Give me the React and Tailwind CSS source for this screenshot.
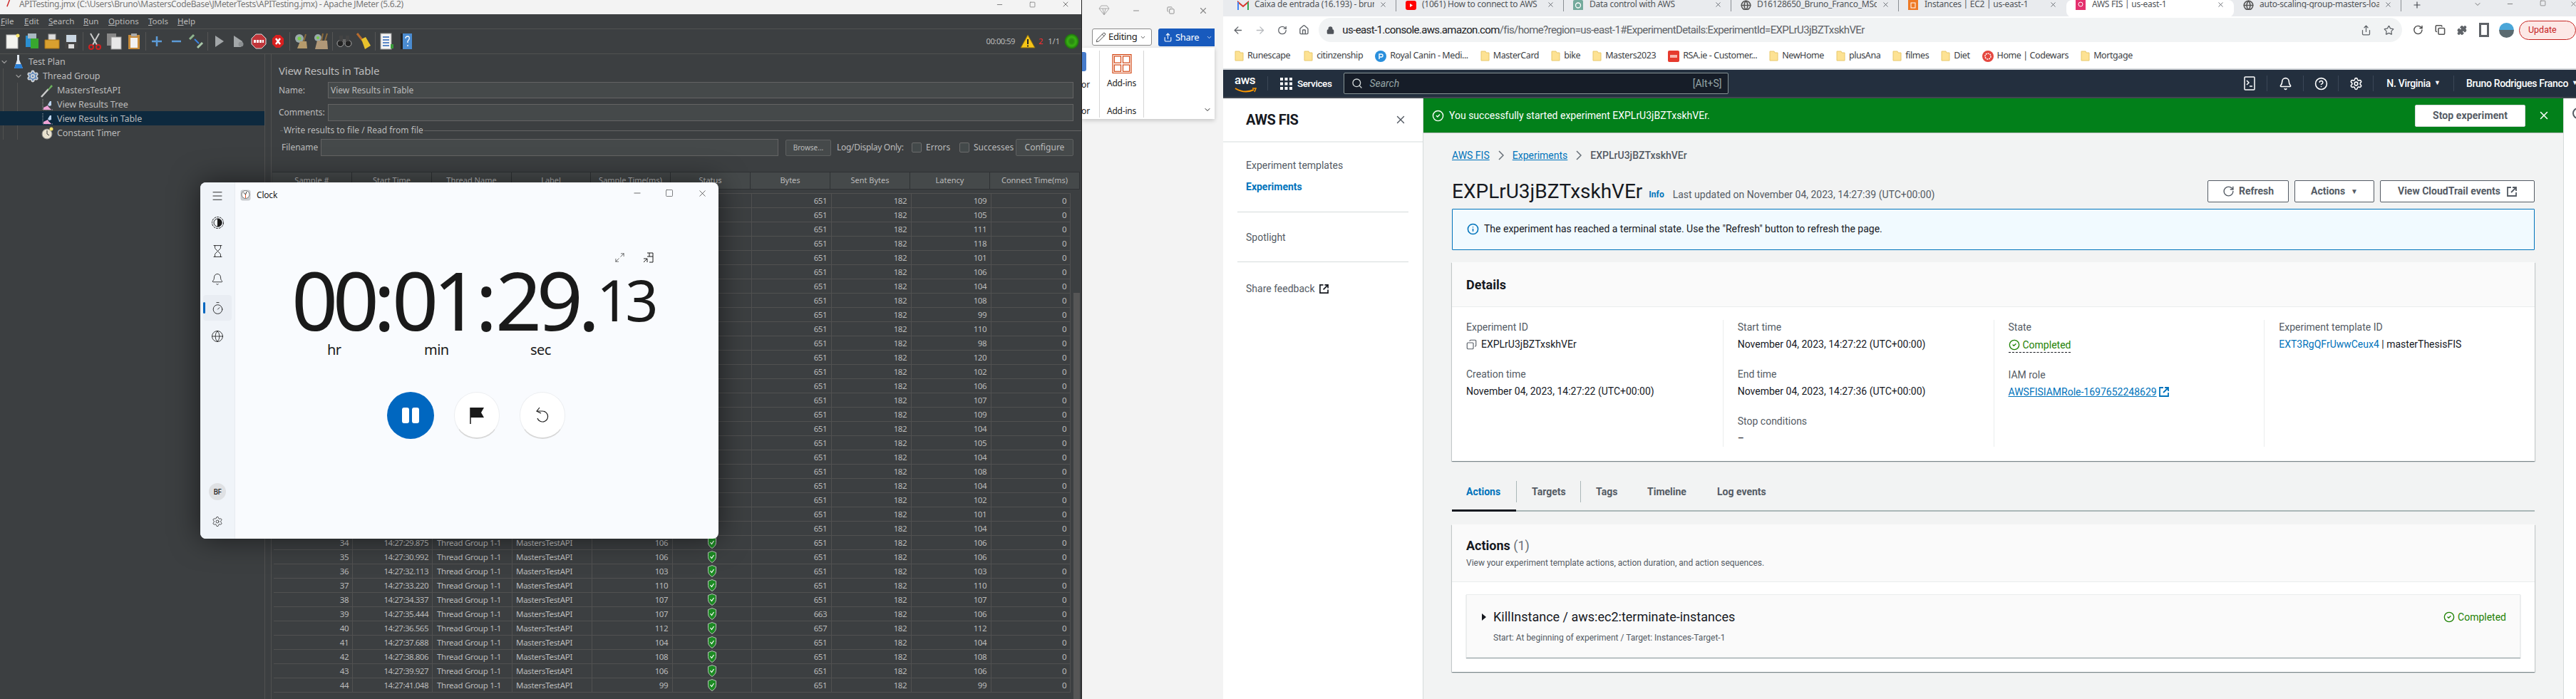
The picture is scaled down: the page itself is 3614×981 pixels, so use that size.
import {
  ArrowLeft, ArrowRight, RotateCw, Home, Lock, Share, Star, Puzzle, Search, Bell, Settings,
  X, Minus, Square, Copy, CircleCheck, Info, CircleHelp, Hourglass, Timer, Globe, Menu, Plus, ChevronDown,
  Pencil, Maximize2,
} from 'lucide-react'

const latency = [109, 105, 111, 118, 101, 106, 104, 108, 99, 110, 98, 120, 102, 106, 107, 109, 104, 105, 104, 108, 104, 102, 101, 104, 106, 106, 103, 110, 107, 106, 112, 104, 108, 106, 99]
const sampleTime = { 39: 107 }
const bytesOverride = { 39: 663, 40: 657 }
const times = { 34: '14:27:29.875', 35: '14:27:30.992', 36: '14:27:32.113', 37: '14:27:33.220', 38: '14:27:34.337', 39: '14:27:35.444', 40: '14:27:36.565', 41: '14:27:37.688', 42: '14:27:38.806', 43: '14:27:39.927', 44: '14:27:41.048' }

const headers = ['Sample #', 'Start Time', 'Thread Name', 'Label', 'Sample Time(ms)', 'Status', 'Bytes', 'Sent Bytes', 'Latency', 'Connect Time(ms)']
const rows = latency.map((l, i) => {
  const n = i + 10
  return { n, time: times[n], sample: sampleTime[n] || l, bytes: bytesOverride[n] || 651, latency: l, visible: n >= 34 }
})

function Folder() {
  return (
    <svg width="13" height="15" viewBox="0 0 13 15" className="shrink-0">
      <path d="M1 1h6l1 2h4v11H1z" fill="#fde293" stroke="#e8c86a" strokeWidth="1" />
    </svg>
  )
}

function TabX({ cls = '' }) {
  return <X size={11} strokeWidth={1.6} className={`text-[#45494f] shrink-0 ${cls}`} />
}

function Shield() {
  return (
    <svg width="12" height="17" viewBox="0 0 12 17">
      <path d="M6 .5l5.5 2v6c0 4-3 6.500-5.500 8C3.500 15 .5 12.500.5 8.500v-6z" fill="#1c8a23" stroke="#b8c0b8" />
      <path d="M3.500 8l2 2.500L8.500 6" fill="none" stroke="#fff" strokeWidth="1.200" />
    </svg>
  )
}

function ToolIcon({ name }) {
  switch (name) {
    case 'new':
      return <svg width="20" height="22" viewBox="0 0 20 22"><rect x="1" y="2" width="16" height="19" fill="#f4f4f0" stroke="#bbb" /><circle cx="17" cy="3" r="2.500" fill="#f5e26a" /></svg>
    case 'templates':
      return <svg width="20" height="24" viewBox="0 0 20 24"><rect x="1" y="4" width="7" height="16" fill="#2a8fd0" /><rect x="8" y="8" width="11" height="14" fill="#38a82e" /><rect x="4" y="1" width="12" height="7" fill="#a8b8c0" /></svg>
    case 'open':
      return <svg width="22" height="22" viewBox="0 0 22 22"><rect x="6" y="1" width="10" height="10" fill="#ddd" stroke="#999" /><path d="M1 9h20v12H1z" fill="#d9a02f" stroke="#a87518" /></svg>
    case 'save':
      return <svg width="20" height="22" viewBox="0 0 20 22"><rect x="1" y="1" width="18" height="20" fill="#444" /><rect x="3" y="2" width="14" height="10" fill="#c9d6e2" /><rect x="6" y="15" width="8" height="6" fill="#ddd" /></svg>
    case 'cut':
      return <svg width="18" height="24" viewBox="0 0 18 24" fill="none"><path d="M3 1l9 16M15 1L6 17" stroke="#ccc" strokeWidth="2" /><circle cx="4" cy="20" r="3" stroke="#d32020" strokeWidth="2" /><circle cx="14" cy="20" r="3" stroke="#d32020" strokeWidth="2" /></svg>
    case 'copy':
      return <svg width="22" height="24" viewBox="0 0 22 24"><rect x="1" y="1" width="13" height="17" fill="#888" /><rect x="7" y="6" width="14" height="17" fill="#e8e8e8" stroke="#999" /></svg>
    case 'paste':
      return <svg width="18" height="24" viewBox="0 0 18 24"><rect x="1" y="3" width="16" height="20" fill="#c78c3c" /><rect x="4" y="7" width="10" height="14" fill="#f2f2f2" /><rect x="5" y="1" width="8" height="4" fill="#aaa" /></svg>
    case 'plus':
      return <svg width="16" height="16" viewBox="0 0 16 16"><path d="M8 1v14M1 8h14" stroke="#5d9cd8" strokeWidth="2.500" /></svg>
    case 'minus':
      return <svg width="16" height="16" viewBox="0 0 16 16"><path d="M1 8h13" stroke="#5d9cd8" strokeWidth="2.500" /></svg>
    case 'toggle':
      return <svg width="22" height="22" viewBox="0 0 22 22"><path d="M2 8l6-6" stroke="#8fb58f" strokeWidth="3" /><path d="M9 8l6 6" stroke="#3b84e0" strokeWidth="2" /><path d="M13 20l7-7" stroke="#a9c7a9" strokeWidth="3" /></svg>
    case 'play':
      return <svg width="14" height="18" viewBox="0 0 14 18"><path d="M1 1l12 8-12 8z" fill="#a3a7a9" /></svg>
    case 'playn':
      return <svg width="16" height="18" viewBox="0 0 16 18"><path d="M1 1l12 8-2 8H1z" fill="#a3a7a9" /><circle cx="11" cy="13" r="3.500" fill="#8b8f91" /></svg>
    case 'stop':
      return <svg width="22" height="22" viewBox="0 0 22 22"><path d="M7 1h8l6 6v8l-6 6H7l-6-6V7z" fill="#c0353a" stroke="#ddd" /><path d="M4 11h14" stroke="#fff" strokeWidth="4" strokeDasharray="3 1" /></svg>
    case 'shut':
      return <svg width="18" height="20" viewBox="0 0 18 20"><path d="M6 1h6l5 5v8l-5 5H6l-5-5V6z" fill="#d81f1f" /><path d="M6 6l6 8M12 6l-6 8" stroke="#fff" strokeWidth="2.500" /></svg>
    case 'clear':
      return <svg width="20" height="24" viewBox="0 0 20 24"><circle cx="7" cy="8" r="6" fill="#9aa" /><circle cx="7" cy="8" r="2.500" fill="#7c4" /><path d="M16 2l-3 10" stroke="#8b6b3c" strokeWidth="2" /><path d="M4 22l4-10h9l1 10z" fill="#b59a6c" /></svg>
    case 'clearall':
      return <svg width="22" height="24" viewBox="0 0 22 24"><circle cx="7" cy="7" r="5" fill="#9aa" /><circle cx="7" cy="7" r="2" fill="#7c4" /><path d="M14 1l-2 10M20 1l-3 10" stroke="#8b6b3c" strokeWidth="2" /><path d="M3 23l3-12h14l1 12z" fill="#b09878" /></svg>
    case 'find':
      return <svg width="22" height="20" viewBox="0 0 22 20"><circle cx="5.500" cy="13" r="4.500" fill="#222" stroke="#aaa" /><circle cx="16.500" cy="13" r="4.500" fill="#222" stroke="#aaa" /><rect x="4" y="2" width="5" height="8" fill="#444" /><rect x="13" y="2" width="5" height="8" fill="#444" /><rect x="9" y="7" width="4" height="4" fill="#666" /></svg>
    case 'broom':
      return <svg width="22" height="24" viewBox="0 0 22 24"><path d="M2 1l8 10" stroke="#b76b2d" strokeWidth="3" /><path d="M8 9l6-3 7 12-8 5z" fill="#e8c22c" /></svg>
    case 'func':
      return <svg width="20" height="24" viewBox="0 0 20 24"><rect x="1" y="1" width="15" height="22" fill="#f4f4f4" stroke="#999" /><path d="M4 6h9M4 10h9M4 14h9M4 18h9" stroke="#2a64b8" strokeWidth="1.500" /><rect x="15" y="16" width="4" height="6" fill="#3a9a3a" /></svg>
    case 'help':
      return <svg width="18" height="24" viewBox="0 0 18 24"><rect x="1" y="1" width="16" height="22" fill="#4a8bd0" /><rect x="1" y="1" width="3" height="22" fill="#222" /><path d="M8 8q0-3 3-3t2 4l-2 3v2M11 17v2" stroke="#fff" fill="none" strokeWidth="1.300" /></svg>
    default:
      return null
  }
}

const tools = ['new', 'templates', 'open', 'save', '|', 'cut', 'copy', 'paste', '|', 'plus', 'minus', 'toggle', '|', 'play', 'playn', 'stop', 'shut', '|', 'clear', 'clearall', '|', 'find', 'broom', '|', 'func', 'help']

const menus = [['F', 'ile', 33], ['E', 'dit', 34], ['S', 'earch', 49], ['R', 'un', 35], ['O', 'ptions', 56], ['T', 'ools', 41], ['H', 'elp', 30]]

function TreeIcon({ kind }) {
  if (kind === 'flask') return <svg width="14" height="22" viewBox="0 0 14 22"><path d="M5 1h3v7l5 12H1L5 8z" fill="#dfe6ee" /><path d="M3 14h8l2 6H1z" fill="#2a7fd6" /></svg>
  if (kind === 'gear') return <Settings size={18} className="text-[#cfd3d6] fill-[#5b84b8]" strokeWidth={2.400} />
  if (kind === 'pipette') return <svg width="18" height="20" viewBox="0 0 18 20"><path d="M1 19l10-11" stroke="#ccc" strokeWidth="2.500" /><path d="M10 9l5-7 2 2-6 6z" fill="#6db35e" /></svg>
  if (kind === 'graph') return <svg width="15" height="16" viewBox="0 0 15 16"><path d="M1 0v15h14" stroke="#aaa" fill="none" strokeDasharray="1 1" /><path d="M2 15v-3l6-3 1 2 4 4z" fill="#f0a3d6" /><path d="M8 8l3-5 2 0v6l-3 1z" fill="#bcd4f0" /></svg>
  return <svg width="17" height="18" viewBox="0 0 17 18"><circle cx="8" cy="10" r="7" fill="#e8e2d0" stroke="#888" /><path d="M8 5v5l3 2" stroke="#333" fill="none" /><circle cx="14" cy="3" r="2.500" fill="#f5e26a" /></svg>
}

const treeRows = [
  { label: 'Test Plan', text: 'pl-[40px]', icon: 'flask', iconCls: 'left-[19px]', chev: 'left-[0px]' },
  { label: 'Thread Group', text: 'pl-[60px]', icon: 'gear', iconCls: 'left-[37px]', chev: 'left-[20px]' },
  { label: 'MastersTestAPI', text: 'pl-[80px]', icon: 'pipette', iconCls: 'left-[57px]' },
  { label: 'View Results Tree', text: 'pl-[80px]', icon: 'graph', iconCls: 'left-[59px]' },
  { label: 'View Results in Table', text: 'pl-[80px]', icon: 'graph', iconCls: 'left-[59px]', selected: true },
  { label: 'Constant Timer', text: 'pl-[80px]', icon: 'timer', iconCls: 'left-[58px]' },
]

function JMeter() {
  return (
    <div className="absolute left-0 top-0 w-[1518px] h-[981px] flex flex-col bg-[#3c3f41] border-r border-[#222] overflow-hidden text-[#bbbbbb] text-[11.500px] font-['Noto_Sans',sans-serif]">
      <div className="h-[20px] shrink-0 bg-[#f3f3f3] flex items-start text-[#777] text-[12px]">
        <svg width="8" height="10" viewBox="0 0 8 14" className="ml-[8px]"><path d="M6 0L1 13" stroke="#c22" strokeWidth="2" /></svg>
        <span className="ml-[11px] leading-[11px] tracking-[-0.35px]">APITesting.jmx (C:\Users\Bruno\MastersCodeBase\JMeterTests\APITesting.jmx) - Apache JMeter (5.6.2)</span>
        <div className="ml-auto flex items-center text-[#777]">
          <Minus size={11} className="mr-[36px]" />
          <Square size={9} className="mr-[36px]" />
          <X size={12} className="mr-[16px]" />
        </div>
      </div>
      <div className="h-[21px] shrink-0 flex items-center pl-[1px] border-b border-[#515151]">
        {menus.map(([u, rest, w]) => (
          <span key={u} style={{ width: w }}><span className="underline">{u}</span>{rest}</span>
        ))}
      </div>
      <div className="h-[35px] shrink-0 flex items-center border-b border-[#515151] relative">
        <div className="flex items-center pl-[4px]">
          {tools.map((t, i) => t === '|'
            ? <div key={i} className="w-px h-[26px] bg-[#555] mx-[2px]" />
            : <div key={i} className="w-[27.500px] flex justify-center"><ToolIcon name={t} /></div>)}
        </div>
        <div className="ml-auto flex items-center mr-[3px] text-[11px]">
          <span className="tracking-[-0.4px]">00:00:59</span>
          <svg width="22" height="20" viewBox="0 0 22 20" className="ml-[7px]"><path d="M11 1l10 18H1z" fill="#f5c518" stroke="#8a6d10" /><path d="M11 7v7M11 15.500v2" stroke="#222" strokeWidth="2" /></svg>
          <span className="text-[#ff2a2a] ml-[4px]">2</span>
          <span className="ml-[7px] mr-[6px]">1/1</span>
          <svg width="21" height="36" viewBox="0 0 21 36"><defs><radialGradient id="lamp"><stop offset="0.25" stopColor="#2b8a12" /><stop offset="0.6" stopColor="#38b012" /><stop offset="1" stopColor="#1d6f0d" /></radialGradient></defs><ellipse cx="10.500" cy="18" rx="10" ry="10.500" fill="url(#lamp)" /></svg>
        </div>
      </div>
      <div className="flex-1 flex min-h-0">
        <div className="w-[372px] shrink-0 relative border-r border-[#515151]">
          <div className="absolute left-[4px] top-[20px] h-[100px] w-px bg-[#515151]" />
          <div className="absolute left-[24px] top-[40px] h-[80px] w-px bg-[#515151]" />
          {treeRows.map(r => (
            <div key={r.label} className={`relative h-[20px] flex items-center pt-[2px] text-[12.500px] tracking-[-0.1px] ${r.text} ${r.selected ? 'bg-[#0d293e]' : ''}`}>
              {r.chev && <ChevronDown size={12} strokeWidth={2.400} className={`absolute ${r.chev} text-[#999]`} />}
              <span className={`absolute ${r.iconCls} flex items-center`}><TreeIcon kind={r.icon} /></span>
              {r.label}
            </div>
          ))}
        </div>
        <div className="w-[9px] shrink-0 border-r border-[#515151]" />
        <div className="flex-1 min-w-0 flex flex-col relative">
          <div className="h-[39px] shrink-0 pl-[10px] flex items-center pt-[8px] text-[15px] tracking-[-0.2px]">View Results in Table</div>
          <div className="h-[23px] shrink-0 flex items-center pl-[10px] text-[12px]">
            <span className="w-[69px]">Name:</span>
            <div className="w-[1046px] h-[23px] bg-[#45494a] border border-[#646464] flex items-center pl-[3px]">View Results in Table</div>
          </div>
          <div className="h-[24px] mt-[8px] shrink-0 flex items-center pl-[10px] text-[12px]">
            <span className="w-[69px]">Comments:</span>
            <div className="w-[1046px] h-[24px] bg-[#45494a] border border-[#646464]" />
          </div>
          <div className="h-[14px] mt-[6px] shrink-0 flex items-center pl-[12px] text-[12px]">
            <div className="w-[4px] h-px bg-[#646464]" />
            <span className="px-[1px]">Write results to file / Read from file</span>
            <div className="w-[922px] h-px bg-[#646464]" />
          </div>
          <div className="h-[24px] mt-[5px] shrink-0 flex items-center pl-[14px] text-[12px]">
            <span className="w-[55px]">Filename</span>
            <div className="w-[642px] h-[24px] bg-[#45494a] border border-[#646464]" />
            <div className="w-[64px] h-[23px] ml-[10px] bg-[#45494a] border border-[#5e6060] rounded-[2px] flex items-center justify-center text-[10px]">Browse...</div>
            <span className="ml-[8px] w-[105px] tracking-[-0.3px]">Log/Display Only:</span>
            <div className="w-[14px] h-[14px] bg-[#43494a] border border-[#6b6b6b] rounded-[2px]" />
            <span className="ml-[6px] w-[47px]">Errors</span>
            <div className="w-[14px] h-[14px] bg-[#43494a] border border-[#6b6b6b] rounded-[2px]" />
            <span className="ml-[6px] w-[59px]">Successes</span>
            <div className="w-[81px] h-[24px] bg-[#45494a] border border-[#5e6060] rounded-[2px] flex items-center justify-center">Configure</div>
          </div>
          <div className="h-[25px] mt-[22px] mx-[1px] shrink-0 flex bg-[#45494a] border-y border-[#2f3234] w-[1133px] text-[11px]">
            {headers.map((h, i) => (
              <div key={h} className={`h-full flex items-center justify-center border-r border-[#2f3234] ${i === 9 ? 'w-[126px]' : i === 3 ? 'w-[111px]' : 'w-[112px]'}`}>{h}</div>
            ))}
          </div>
          <div className="pl-[3px] pt-[5px] flex-1 min-h-0 text-[11.500px] tracking-[-0.5px] relative">
            {rows.map(r => (
              <div key={r.n} className="h-[20px] w-[1118px] flex border-t border-[#515151] items-center">
                <div className="w-[111px] h-full border-r border-[#515151] flex items-center justify-end pr-[5px]">{r.visible && r.n}</div>
                <div className="w-[112px] h-full border-r border-[#515151] flex items-center justify-end pr-[5px]">{r.visible && r.time}</div>
                <div className="w-[112px] h-full border-r border-[#515151] flex items-center pl-[6px] tracking-[-0.3px]">{r.visible && 'Thread Group 1-1'}</div>
                <div className="w-[112px] h-full border-r border-[#515151] flex items-center pl-[5px] tracking-[-0.3px]">{r.visible && 'MastersTestAPI'}</div>
                <div className="w-[113px] h-full border-r border-[#515151] flex items-center justify-end pr-[6px]">{r.visible && r.sample}</div>
                <div className="w-[111px] h-full border-r border-[#515151] flex items-center justify-center">{r.visible && <Shield />}</div>
                <div className="w-[112px] h-full border-r border-[#515151] flex items-center justify-end pr-[6px]">{r.bytes}</div>
                <div className="w-[112px] h-full border-r border-[#515151] flex items-center justify-end pr-[6px]">182</div>
                <div className="w-[112px] h-full border-r border-[#515151] flex items-center justify-end pr-[6px]">{r.latency}</div>
                <div className="w-[111px] h-full border-r border-[#515151] flex items-center justify-end pr-[5px]">0</div>
              </div>
            ))}
            <div className="w-[1118px] border-t border-[#515151]" />
            <div className="absolute left-[1125px] top-[145px] w-[9px] h-[600px] bg-[#565656]" />
          </div>
        </div>
      </div>
    </div>
  )
}

function Word() {
  return (
    <div className="absolute left-[1518px] top-0 w-[198px] h-[981px] bg-[#f3f3f3] text-[#222] text-[12px] font-['Noto_Sans',sans-serif] overflow-hidden">
      <div className="h-[40px] flex items-start pt-[7px] text-[#888]">
        <svg width="16" height="15" viewBox="0 0 16 15" fill="none" stroke="#aaa" className="ml-[23px]"><path d="M4 1h8l3 4-7 9-7-9zM1 5h14M6 5l2 9 2-9" /></svg>
        <Minus size={12} className="ml-[31px] mt-[2px]" />
        <Copy size={11} className="ml-[37px] mt-[2px]" />
        <X size={14} className="ml-[33px] mt-[1px]" />
      </div>
      <div className="h-[27px] flex items-start pl-[14px]">
        <div className="w-[84px] h-[24px] bg-white border border-[#8a8a8a] rounded-[3px] flex items-center pl-[4px] gap-[3px] text-[13px] tracking-[-0.3px]">
          <Pencil size={15} strokeWidth={1.300} />Editing<ChevronDown size={9} />
        </div>
        <div className="w-[79px] h-[25px] ml-[9px] bg-[#185abd] rounded-l-[3px] text-white flex items-center pl-[7px] gap-[4px] text-[13px] tracking-[-0.3px]">
          <Share size={13} />Share<ChevronDown size={9} className="ml-[6px]" />
        </div>
      </div>
      <div className="w-[186px] h-[100px] bg-white shadow-[0_2px_6px_rgba(0,0,0,0.2)] relative flex">
        <div className="w-[25px] h-[94px] border-r border-[#d6d6d6] mt-[4px] flex flex-col items-start text-[12px]">
          <div className="h-[30px] mt-[2px] w-[6px] bg-[#185abd] rounded-r-[3px] opacity-80" />
          <span className="mt-[10px] -ml-[1px] h-[40px]">or</span>
          <span className="-ml-[1px]">or</span>
        </div>
        <div className="w-[62px] h-[94px] mt-[4px] border-r border-[#d6d6d6] flex flex-col items-center text-[12px] tracking-[-0.2px]">
          <svg width="28" height="28" viewBox="0 0 28 28" fill="none" stroke="#d1410c" strokeWidth="1.200" className="mt-[5px]"><rect x=".6" y=".6" width="26.800" height="26.800" /><rect x="3" y="3" width="9.500" height="9.500" /><rect x="15.500" y="3" width="9.500" height="9.500" /><rect x="3" y="15.500" width="9.500" height="9.500" /><rect x="15.500" y="15.500" width="9.500" height="9.500" /></svg>
          <span className="mt-[5px] h-[40px]">Add-ins</span>
          <span>Add-ins</span>
        </div>
        <ChevronDown size={12} className="absolute left-[170px] top-[81px]" />
      </div>
    </div>
  )
}

function NavSep() {
  return <div className="w-px h-[22px] bg-[#3b4757]" />
}

function Tab({ w = 'w-[235px]', icon, title, active, sep = true }) {
  return (
    <div className={`${w} h-[23px] shrink-0 relative flex items-start ${active ? 'bg-white rounded-t-[8px] rounded-b-[8px] h-[24px]' : ''}`}>
      <span className="ml-[12px] w-[16px] h-[14px] flex items-center justify-center overflow-hidden">{icon}</span>
      <span className="ml-[8px] w-[168px] whitespace-nowrap overflow-hidden leading-[12px] text-[12px] tracking-[-0.25px] text-[#505458]">{title}</span>
      <TabX cls="ml-[7px] mt-[1px]" />
      {sep && <div className="absolute right-0 top-0 h-[16px] w-px bg-[#8a8e93]" />}
    </div>
  )
}

const bookmarks = [
  [null, 'Runescape', 'ml-[16px]'],
  [null, 'citinzenship', 'ml-[19px]'],
  ['royal', 'Royal Canin - Medi...', 'ml-[17px]'],
  [null, 'MasterCard', 'ml-[17px]'],
  [null, 'bike', 'ml-[17px]'],
  [null, 'Masters2023', 'ml-[17px]'],
  ['rsa', 'RSA.ie - Customer...', 'ml-[17px]'],
  [null, 'NewHome', 'ml-[17px]'],
  [null, 'plusAna', 'ml-[17px]'],
  [null, 'filmes', 'ml-[17px]'],
  [null, 'Diet', 'ml-[17px]'],
  ['gpt', 'Home | Codewars', 'ml-[17px]'],
  [null, 'Mortgage', 'ml-[17px]'],
]

function BookmarkIcon({ kind }) {
  if (kind === 'royal') return <svg width="16" height="16" viewBox="0 0 16 16" className="shrink-0"><circle cx="8" cy="8" r="8" fill="#2a8fdc" /><path d="M6 12V5h3q2 0 2 2t-2 2H6" stroke="#fff" fill="none" strokeWidth="1.400" /></svg>
  if (kind === 'rsa') return <svg width="16" height="16" viewBox="0 0 16 16" className="shrink-0"><rect width="16" height="16" rx="2" fill="#e63a2e" /><rect x="3" y="6" width="10" height="4" fill="#f7b6ae" /></svg>
  if (kind === 'gpt') return <svg width="16" height="16" viewBox="0 0 16 16" className="shrink-0"><circle cx="8" cy="8" r="8" fill="#e5473f" /><circle cx="8" cy="8" r="4" fill="none" stroke="#fff" strokeWidth="1.500" strokeDasharray="2 1" /></svg>
  return <Folder />
}

function Label({ children, cls = '' }) {
  return <div className={`text-[#545b64] text-[14px] leading-[20px] ${cls}`}>{children}</div>
}

function Value({ children, cls = '' }) {
  return <div className={`text-[#16191f] text-[14px] leading-[20px] mt-[4px] ${cls}`}>{children}</div>
}

function ExtIcon({ size = 13 }) {
  return (
    <svg width={size} height={size} viewBox="0 0 14 14" fill="none" stroke="currentColor" strokeWidth="1.800" className="inline-block align-[-2px]">
      <path d="M6 1H1v12h12V8M8 1h5v5M13 1L6 8" />
    </svg>
  )
}

function Browser() {
  return (
    <div className="absolute left-[1716px] top-0 w-[1898px] h-[981px] flex flex-col bg-white overflow-hidden font-['Roboto',sans-serif]">
      <div className="h-[23px] shrink-0 bg-[#e9ebee] flex pl-[8px] font-['Noto_Sans',sans-serif]">
        <Tab title="Caixa de entrada (16.193) - bruno" icon={<svg width="16" height="13" viewBox="0 0 16 13"><path d="M1 13V2l7 6 7-6v11" fill="none" stroke="#d9352a" strokeWidth="2" /><path d="M1 2v11" stroke="#4285f4" strokeWidth="2" /><path d="M15 2v11" stroke="#34a853" strokeWidth="2" /></svg>} />
        <Tab title="(1061) How to connect to AWS" icon={<svg width="15" height="13" viewBox="0 0 15 13"><rect width="15" height="13" rx="3" fill="#f00" /><path d="M6 4l4 2.500L6 9z" fill="#fff" /></svg>} />
        <Tab title="Data control with AWS" icon={<svg width="14" height="15" viewBox="0 0 14 15"><rect width="14" height="15" rx="2" fill="#74aa9c" /><circle cx="7" cy="7.500" r="3.500" fill="none" stroke="#fff" strokeWidth="1.300" /></svg>} />
        <Tab title="D16128650_Bruno_Franco_MSc" icon={<Globe size={15} className="text-[#555]" strokeWidth={2.500} />} />
        <Tab sep={false} title="Instances | EC2 | us-east-1" icon={<svg width="14" height="15" viewBox="0 0 14 15"><rect width="14" height="15" fill="#ee7a26" /><rect x="4" y="4" width="6" height="7" fill="none" stroke="#fff" /></svg>} />
        <Tab active sep={false} title="AWS FIS | us-east-1" icon={<svg width="14" height="15" viewBox="0 0 14 15"><rect width="14" height="15" fill="#e4306e" /><circle cx="7" cy="6" r="3" fill="none" stroke="#fff" /></svg>} />
        <Tab title="auto-scaling-group-masters-load" icon={<Globe size={15} className="text-[#555]" strokeWidth={2.500} />} />
        <Plus size={14} strokeWidth={2} className="ml-[15px] mt-[0px] text-[#45494f] shrink-0" />
        <ChevronDown size={12} className="ml-[72px] text-[#777] shrink-0" />
        <Minus size={11} className="ml-[34px] text-[#777] shrink-0" />
        <Square size={9} className="ml-[36px] text-[#777] shrink-0" />
        <X size={11} className="ml-[33px] text-[#777] shrink-0" />
      </div>

      <div className="h-[38px] shrink-0 flex items-center pl-[13px] text-[#5f6368]">
        <ArrowLeft size={17} strokeWidth={2} />
        <ArrowRight size={17} strokeWidth={2} className="ml-[15px] text-[#b6b9bd]" />
        <RotateCw size={15} strokeWidth={2.200} className="ml-[16px]" />
        <Home size={16} strokeWidth={2.200} className="ml-[17px]" />
        <div className="ml-[13px] w-[1520px] h-[34px] rounded-full bg-[#f1f3f4] flex items-center pl-[11px] pr-[10px] shrink-0">
          <Lock size={11} strokeWidth={3} className="text-[#50545a] fill-[#50545a]" />
          <span className="ml-[11px] text-[15px] text-[#202124] tracking-[-0.62px] whitespace-nowrap"><span>us-east-1.console.aws.amazon.com</span><span className="text-[#5f6368]">/fis/home?region=us-east-1#ExperimentDetails:ExperimentId=EXPLrU3jBZTxskhVEr</span></span>
          <Share size={15} className="ml-auto" />
          <Star size={15} strokeWidth={2} className="ml-[17px] mr-[1px]" />
        </div>
        <RotateCw size={16} strokeWidth={2.200} className="ml-[15px] text-[#444]" />
        <Copy size={16} strokeWidth={2.500} className="ml-[16px] text-[#555]" />
        <Puzzle size={15} strokeWidth={2} className="ml-[16px] text-[#5f6368] fill-[#5f6368]" />
        <div className="ml-[17px] w-[14px] h-[20px] border-[3px] border-[#5f6368] shrink-0" />
        <div className="ml-[14px] w-[21px] h-[21px] rounded-full bg-[linear-gradient(180deg,#4aa6d8_50%,#5a6a70_50%)] shrink-0" />
        <div className="ml-[7px] w-[80px] h-[27px] rounded-full border border-[#c5221f] bg-[#fce8e6] text-[#c5221f] text-[12.500px] flex items-center pl-[12px] shrink-0">Update</div>
      </div>

      <div className="h-[37px] shrink-0 flex items-center pl-[16px] border-b-2 border-[#d3d6da] text-[12.500px] tracking-[-0.42px] text-[#3c4043] font-['Noto_Sans',sans-serif]">
        {bookmarks.map(([kind, label, ml], i) => (
          <div key={label} className={`flex items-center gap-[5px] whitespace-nowrap ${i === 0 ? '' : ml}`}>
            <BookmarkIcon kind={kind} />
            <span>{label}</span>
          </div>
        ))}
      </div>

      <div className="h-[40px] shrink-0 bg-[#232f3e] flex items-center text-white border-b-2 border-[#414750]">
        <div className="w-[46px] ml-[16px] relative h-full shrink-0">
          <span className="absolute left-0 top-[4px] text-[17px] font-medium tracking-[-0.5px] leading-[20px]">aws</span>
          <svg width="32" height="9" viewBox="0 0 32 9" fill="none" className="absolute left-0 top-[25px]"><path d="M1 1q13 8 26 2" stroke="#ff9900" strokeWidth="2" /><path d="M25 1l5 0-2 5" stroke="#ff9900" strokeWidth="1.500" /></svg>
        </div>
        <div className="w-px h-[20px] bg-[#3b4757]" />
        <svg width="17" height="17" viewBox="0 0 17 17" fill="#fff" className="ml-[17px]"><rect width="4" height="4" /><rect x="6.500" width="4" height="4" /><rect x="13" width="4" height="4" /><rect y="6.500" width="4" height="4" /><rect x="6.500" y="6.500" width="4" height="4" /><rect x="13" y="6.500" width="4" height="4" /><rect y="13" width="4" height="4" /><rect x="6.500" y="13" width="4" height="4" /><rect x="13" y="13" width="4" height="4" /></svg>
        <span className="ml-[7px] text-[13.500px] font-medium tracking-[-0.4px]">Services</span>
        <div className="ml-[17px] w-[540px] h-[30px] bg-[#161d28] border border-[#879596] rounded-[2px] flex items-center pl-[10px] pr-[9px] text-[#95a5a6] text-[14px] shrink-0">
          <Search size={16} className="text-[#d5dbdb]" />
          <span className="ml-[9px] italic">Search</span>
          <span className="ml-auto">[Alt+S]</span>
        </div>
        <div className="ml-auto flex items-center">
          <svg width="16" height="20" viewBox="0 0 16 20" fill="none" stroke="#fff" strokeWidth="1.500"><rect x="1" y="1" width="14" height="18" rx="1" /><path d="M4 6l3 3-3 3M8 14h4" /></svg>
          <div className="ml-[16px]"><NavSep /></div>
          <Bell size={19} className="ml-[16px] mr-[15px] fill-transparent" />
          <NavSep />
          <CircleHelp size={19} className="ml-[15px] mr-[14px]" />
          <NavSep />
          <Settings size={19} className="ml-[15px] mr-[14px]" />
          <NavSep />
          <span className="ml-[18px] text-[14px] font-medium tracking-[-0.3px]">N. Virginia</span>
          <span className="ml-[5px] text-[9px]">▼</span>
          <div className="ml-[18px]"><NavSep /></div>
          <span className="ml-[17px] text-[14px] font-medium tracking-[-0.35px] whitespace-nowrap">Bruno Rodrigues Franco</span>
          <span className="ml-[5px] text-[9px] w-[6px] overflow-hidden">▼</span>
        </div>
      </div>

      <div className="flex-1 flex min-h-0">
        <div className="w-[281px] shrink-0 border-r border-[#d5dbdb] bg-white text-[#545b64] text-[14px]">
          <div className="h-[62px] border-b-2 border-[#eaeded] flex items-center justify-between pl-[32px] pr-[22px]">
            <span className="text-[20px] font-bold text-[#16191f] tracking-[-0.5px]">AWS FIS</span>
            <X size={18} strokeWidth={1.800} className="text-[#545b64]" />
          </div>
          <div className="pl-[32px] pt-[22px] h-[97px] leading-[20px] mx-0">
            <div>Experiment templates</div>
            <div className="mt-[10px] text-[#0073bb] font-bold">Experiments</div>
          </div>
          <div className="mx-[20px] h-px bg-[#d5dbdb]" />
          <div className="pl-[32px] pt-[25px] h-[69px] leading-[20px]">Spotlight</div>
          <div className="mx-[20px] h-px bg-[#d5dbdb]" />
          <div className="pl-[32px] pt-[27px] leading-[20px] flex items-center gap-[6px]">Share feedback <span className="text-[#16191f]"><ExtIcon /></span></div>
        </div>

        <div className="flex-1 min-w-0 bg-[#f2f3f3] flex flex-col">
          <div className="h-[49px] shrink-0 bg-[#02801a] border-b border-[#bbb] flex items-center pl-[12px] pr-[18px] text-white text-[14px]">
            <CircleCheck size={17} strokeWidth={2} />
            <span className="ml-[7px]">You successfully started experiment EXPLrU3jBZTxskhVEr.</span>
            <div className="ml-auto w-[155px] h-[31px] bg-white border border-[#d5dbdb] rounded-[2px] flex items-center justify-center text-[#545b64] font-bold tracking-[0.1px]">Stop experiment</div>
            <X size={18} strokeWidth={2} className="ml-[17px]" />
          </div>
          <div className="pl-[40px] pr-[40px] flex flex-col flex-1">
            <div className="h-[20px] mt-[21px] flex items-center text-[14px] text-[#0073bb]">
              <span className="underline">AWS FIS</span>
              <svg width="8" height="14" viewBox="0 0 8 14" fill="none" stroke="#687078" strokeWidth="1.500" className="mx-[12px]"><path d="M1 1l6 6-6 6" /></svg>
              <span className="underline">Experiments</span>
              <svg width="8" height="14" viewBox="0 0 8 14" fill="none" stroke="#687078" strokeWidth="1.500" className="mx-[12px]"><path d="M1 1l6 6-6 6" /></svg>
              <span className="text-[#545b64] font-medium">EXPLrU3jBZTxskhVEr</span>
            </div>
            <div className="h-[31px] mt-[25px] flex items-center">
              <span className="text-[28px] text-[#16191f] leading-[31px]">EXPLrU3jBZTxskhVEr</span>
              <span className="ml-[9px] mt-[8px] text-[12px] font-bold text-[#0073bb]">Info</span>
              <span className="ml-[12px] mt-[9px] text-[14px] text-[#545b64]">Last updated on November 04, 2023, 14:27:39 (UTC+00:00)</span>
              <div className="ml-auto flex gap-[8px] text-[14px] font-bold text-[#545b64]">
                <div className="w-[114px] h-[31px] bg-white border border-[#545b64] rounded-[2px] flex items-center justify-center gap-[6px]"><RotateCw size={17} strokeWidth={2} />Refresh</div>
                <div className="w-[112px] h-[31px] bg-white border border-[#545b64] rounded-[2px] flex items-center justify-center gap-[8px]">Actions<span className="text-[10px]">▼</span></div>
                <div className="w-[217px] h-[31px] bg-white border border-[#545b64] rounded-[2px] flex items-center justify-center gap-[9px]">View CloudTrail events<ExtIcon size={14} /></div>
              </div>
            </div>
            <div className="h-[58px] mt-[9px] bg-[#f1faff] border border-[#0073bb] rounded-[1px] flex items-center pl-[20px] text-[14px] text-[#16191f] pb-[2px]">
              <Info size={17} strokeWidth={2.200} className="text-[#0073bb]" />
              <span className="ml-[7px]">The experiment has reached a terminal state. Use the "Refresh" button to refresh the page.</span>
            </div>
            <div className="h-[279px] mt-[17px] bg-white shadow-[0_1px_1px_rgba(0,28,36,0.3),1px_1px_1px_rgba(0,28,36,0.15),-1px_1px_1px_rgba(0,28,36,0.15)]">
              <div className="h-[63px] bg-[#fafafa] border-b border-[#eaeded] flex items-center pl-[20px] text-[18px] font-bold text-[#16191f]">Details</div>
              <div className="grid grid-cols-4 pt-[18px]">
                <div className="h-[178px] pl-[20px]">
                  <Label>Experiment ID</Label>
                  <Value cls="flex items-center gap-[6px]"><Copy size={15} strokeWidth={1.800} className="text-[#545b64] -scale-x-100" /><span>EXPLrU3jBZTxskhVEr</span></Value>
                  <Label cls="mt-[22px]">Creation time</Label>
                  <Value>November 04, 2023, 14:27:22 (UTC+00:00)</Value>
                </div>
                <div className="h-[178px] pl-[20px] border-l border-[#eaeded]">
                  <Label>Start time</Label>
                  <Value>November 04, 2023, 14:27:22 (UTC+00:00)</Value>
                  <Label cls="mt-[22px]">End time</Label>
                  <Value>November 04, 2023, 14:27:36 (UTC+00:00)</Value>
                  <Label cls="mt-[22px]">Stop conditions</Label>
                  <Value>–</Value>
                </div>
                <div className="h-[178px] pl-[20px] border-l border-[#eaeded]">
                  <Label>State</Label>
                  <Value cls="text-[#1d8102] flex items-center gap-[4px] w-fit border-b border-dashed border-[#16191f] h-[22px]"><CircleCheck size={16} strokeWidth={2} className="text-[#1d8102]" /><span className="text-[#1d8102]">Completed</span></Value>
                  <Label cls="mt-[21px]">IAM role</Label>
                  <Value><span className="text-[#0073bb] underline">AWSFISIAMRole-1697652248629</span> <span className="text-[#0073bb]"><ExtIcon size={14} /></span></Value>
                </div>
                <div className="h-[178px] pl-[20px] border-l border-[#eaeded]">
                  <Label>Experiment template ID</Label>
                  <Value><span className="text-[#0073bb]">EXT3RgQFrUwwCeux4</span> | masterThesisFIS</Value>
                </div>
              </div>
            </div>
            <div className="h-[43px] mt-[28px] border-b-2 border-[#aab7b8] flex text-[14px] font-bold text-[#545b64]">
              <div className="w-[90px] h-[43px] relative pt-[5px] pl-[20px] border-b-[3px] border-[#16191f]"><span className="text-[#0073bb]">Actions</span></div>
              <div className="w-[90px] h-[30px] border-l border-[#aab7b8] pl-[21px] pt-[5px]">Targets</div>
              <div className="w-[72px] h-[30px] border-l border-[#aab7b8] pl-[21px] pt-[5px]">Tags</div>
              <div className="w-[99px] h-[30px] pl-[22px] pt-[5px]">Timeline</div>
              <div className="h-[30px] pl-[21px] pt-[5px]">Log events</div>
            </div>
            <div className="h-[207px] mt-[18px] bg-white shadow-[0_1px_1px_rgba(0,28,36,0.3),1px_1px_1px_rgba(0,28,36,0.15),-1px_1px_1px_rgba(0,28,36,0.15)]">
              <div className="h-[81px] bg-[#fafafa] border-b border-[#eaeded] pl-[20px] pt-[19px]">
                <div className="text-[18px] leading-[22px] font-bold text-[#16191f]">Actions <span className="font-normal text-[#687078]">(1)</span></div>
                <div className="text-[12px] leading-[16px] mt-[5px] text-[#545b64]">View your experiment template actions, action duration, and action sequences.</div>
              </div>
              <div className="px-[20px] pt-[17px]">
                <div className="h-[89px] bg-[#fafafa] border border-[#eaeded] shadow-[0_1px_1px_rgba(0,28,36,0.4)] pl-[20px] pr-[19px] pt-[19px] relative">
                  <div className="flex items-center">
                    <svg width="8" height="10" viewBox="0 0 8 10" fill="#16191f"><path d="M1 0l6 5-6 5z" /></svg>
                    <span className="ml-[9px] text-[18px] leading-[24px] text-[#16191f]">KillInstance / aws:ec2:terminate-instances</span>
                    <span className="ml-auto text-[14px] text-[#1d8102] flex items-center gap-[4px]"><CircleCheck size={16} strokeWidth={2} />Completed</span>
                  </div>
                  <div className="text-[12px] leading-[16px] mt-[9px] ml-[17px] text-[#545b64]">Start: At beginning of experiment / Target: Instances-Target-1</div>
                </div>
              </div>
            </div>
          </div>
        </div>

        <div className="w-[18px] shrink-0 bg-white border-l border-[#d5dbdb] relative overflow-hidden">
          <div className="absolute left-[12px] top-[13px] w-[16px] h-[16px] rounded-full border-2 border-[#545b64]" />
        </div>
      </div>
    </div>
  )
}

function RailIcon({ children, active }) {
  return (
    <div className={`w-[40px] h-[36px] ml-[4px] mb-[4px] flex items-center justify-center relative rounded-[4px] text-[#1a1a1a] ${active ? 'bg-[#e9edf3]' : ''}`}>
      {active && <div className="absolute left-[0px] top-[10px] w-[3px] h-[16px] rounded-full bg-[#0067c0]" />}
      {children}
    </div>
  )
}

function ClockWin() {
  return (
    <div className="absolute left-[281px] top-[256px] w-[727px] h-[500px] bg-[#f9fbfe] rounded-[8px] shadow-[0_0_40px_rgba(0,0,0,0.55)] flex overflow-hidden text-[#1a1a1a] font-['Noto_Sans',sans-serif]">
      <div className="w-[49px] shrink-0 bg-[#f0f4f9] border-r border-[#e8ebf0] flex flex-col">
        <div className="h-[38px] flex items-center justify-center"><Menu size={18} strokeWidth={1.200} /></div>
        <div className="mt-[0px]">
          <RailIcon>
            <svg width="17" height="17" viewBox="0 0 17 17" fill="none" stroke="#1a1a1a"><circle cx="8.500" cy="8.500" r="8" strokeDasharray="3 1" /><circle cx="8.500" cy="8.500" r="5.500" /><path d="M8.500 3a5.500 5.500 0 0 1 0 11z" fill="#1a1a1a" /></svg>
          </RailIcon>
          <RailIcon><Hourglass size={19} strokeWidth={1.100} /></RailIcon>
          <RailIcon><Bell size={18} strokeWidth={1.100} /></RailIcon>
          <RailIcon active><Timer size={19} strokeWidth={1.100} /></RailIcon>
          <RailIcon><Globe size={18} strokeWidth={1.100} /></RailIcon>
        </div>
        <div className="mt-auto flex flex-col items-center">
          <div className="w-[24px] h-[24px] rounded-full bg-[#dfe1e4] flex items-center justify-center text-[10px] font-medium tracking-[-0.3px]">BF</div>
          <Settings size={16} strokeWidth={1.100} className="mt-[22px] mb-[16px]" />
        </div>
      </div>
      <div className="flex-1 flex flex-col relative">
        <div className="h-[36px] shrink-0 flex items-center pl-[7px] text-[12px]">
          <svg width="15" height="16" viewBox="0 0 15 16"><rect x=".5" y=".5" width="14" height="15" rx="3" fill="#c9ccd0" /><circle cx="7.500" cy="7" r="5.500" fill="#fff" stroke="#777" /><path d="M4.500 4l3 3 1.500-4" stroke="#333" fill="none" /><path d="M7.500 7v5" stroke="#e8562a" /></svg>
          <span className="ml-[8px] tracking-[-0.2px]">Clock</span>
          <div className="ml-auto flex items-center mb-[6px]">
            <Minus size={14} strokeWidth={1.100} className="mr-[32px]" />
            <Square size={12} strokeWidth={1.100} className="mr-[33px]" />
            <X size={15} strokeWidth={1.000} className="mr-[15px]" />
          </div>
        </div>
        <div className="h-[36px] mt-[62px] flex items-start justify-end gap-[25px] pr-[91px]">
          <Maximize2 size={15} strokeWidth={1} />
          <svg width="15" height="15" viewBox="0 0 15 15" fill="none" stroke="#1a1a1a"><path d="M6 1h8v13H9M1 14l5-5M1 9h5v5M6 6h8M9 1v5" /></svg>
        </div>
        <div className="h-[100px] -mt-[20px] pl-[79px] flex items-end text-[#1a1a1a] font-normal leading-[100px]">
          <span className="text-[114px] tracking-[-7.500px] w-[115px] shrink-0">00</span>
          <span className="text-[114px] w-[26px] shrink-0">:</span>
          <span className="text-[114px] tracking-[-7.500px] w-[117px] shrink-0">01</span>
          <span className="text-[114px] w-[28px] shrink-0">:</span>
          <span className="text-[114px] tracking-[-7.500px] w-[116px] shrink-0">29</span>
          <span className="text-[114px] w-[26px] shrink-0">.</span>
          <span className="text-[81px] tracking-[-6px]">13</span>
        </div>
        <div className="relative h-[28px] mt-[6px] text-[20px] tracking-[-0.5px]">
          <span className="absolute left-[129px] top-0">hr</span>
          <span className="absolute left-[265px] top-0">min</span>
          <span className="absolute left-[414px] top-0">sec</span>
        </div>
        <div className="flex items-center mt-[46px] pl-[213px] gap-[28px]">
          <div className="w-[66px] h-[66px] rounded-full bg-[#0067c0] flex items-center justify-center gap-[4px]">
            <div className="w-[10px] h-[22px] rounded-[3px] bg-white" />
            <div className="w-[10px] h-[22px] rounded-[3px] bg-white" />
          </div>
          <div className="w-[64px] h-[66px] rounded-full bg-white border border-[#eceef1] border-b-[2px] border-b-[#d8d8d8] flex items-center justify-center">
            <svg width="22" height="24" viewBox="0 0 22 24"><path d="M2 1v23" stroke="#1a1a1a" strokeWidth="1.500" /><path d="M2 1h19l-4 7 4 7H2z" fill="#1a1a1a" /></svg>
          </div>
          <div className="w-[64px] h-[66px] rounded-full bg-white border border-[#eceef1] border-b-[2px] border-b-[#d8d8d8] flex items-center justify-center">
            <svg width="22" height="26" viewBox="0 0 22 26" fill="none" stroke="#1a1a1a" strokeWidth="1.200"><path d="M7 2L3 7l6 3" /><path d="M3 7h8a7.500 7.500 0 1 1-7 10" /></svg>
          </div>
        </div>
      </div>
    </div>
  )
}

export default function App() {
  return (
    <div className="relative w-[3614px] h-[981px] overflow-hidden bg-[#f3f3f3]">
      <JMeter />
      <Word />
      <Browser />
      <ClockWin />
    </div>
  )
}
